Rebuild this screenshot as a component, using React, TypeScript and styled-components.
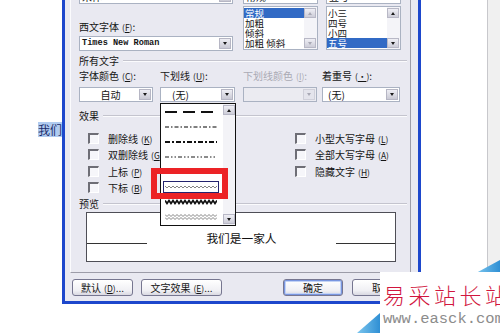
import React from 'react';
import styled, { createGlobalStyle } from 'styled-components';

const CJK = `"Noto Sans CJK SC", "Liberation Sans", sans-serif`;

const GlobalStyle = createGlobalStyle`
  html, body { margin: 0; padding: 0; background: #fff; }
  body { font-family: ${CJK}; }
`;

const Canvas = styled.div`
  position: relative;
  width: 500px;
  height: 333px;
  overflow: hidden;
  display: flex;
  background: #fff;
  font-family: ${CJK};
  font-size: 10px;
  color: #151515;
`;

const DocMargin = styled.div`
  width: 62px;
  flex-shrink: 0;
  box-sizing: border-box;
  padding: 122px 0 0 38px;
`;

const Selection = styled.span`
  display: inline-block;
  background: #b0cbf0;
  color: #1b2b6b;
  font-size: 12px;
  line-height: 15px;
  white-space: nowrap;
`;

const Dialog = styled.div`
  width: 359px;
  height: 304px;
  flex-shrink: 0;
  box-sizing: border-box;
  border: 3px solid #1d47cc;
  border-top: none;
  background: #e9e9f1;
  display: flex;
  flex-direction: column;
`;

const Panel = styled.div`
  height: 273px;
  margin: 0 7px 0 5px;
  box-sizing: border-box;
  border-left: 1px solid #fbfbfd;
  border-right: 1px solid #9c9ca8;
  border-bottom: 1px solid #9c9ca8;
  padding-left: 8px;
  overflow: hidden;
  display: flex;
  flex-direction: column;
`;

const TopRow = styled.div`
  display: flex;
  margin-top: -11px;
`;

const Column = styled.div<{ $width: number; $ml?: number }>`
  width: ${({ $width }) => $width}px;
  margin-left: ${({ $ml }) => $ml ?? 0}px;
  display: flex;
  flex-direction: column;
`;

const Label = styled.div<{ $mt?: number; $disabled?: boolean }>`
  margin-top: ${({ $mt }) => $mt ?? 0}px;
  height: 12px;
  line-height: 12px;
  white-space: nowrap;
  color: ${({ $disabled }) => ($disabled ? '#a9a9b4' : '#151515')};
`;

const Key = styled.span`
  font-size: 8.5px;
  margin-left: 3px;
  & u {
    text-decoration-thickness: 1px;
  }
`;

const Combo = styled.div<{ $width: number; $mt?: number; $disabled?: boolean }>`
  width: ${({ $width }) => $width}px;
  height: 15px;
  margin-top: ${({ $mt }) => $mt ?? 0}px;
  box-sizing: border-box;
  border: 1px solid #aab2c2;
  background: ${({ $disabled }) => ($disabled ? '#ebebf1' : '#fff')};
  display: flex;
  align-items: center;
`;

const ComboText = styled.span<{ $pad?: number; $center?: boolean; $mono?: boolean }>`
  flex: 1;
  padding-left: ${({ $pad }) => $pad ?? 2}px;
  text-align: ${({ $center }) => ($center ? 'center' : 'left')};
  font-family: ${({ $mono }) => ($mono ? '"Liberation Mono", monospace' : CJK)};
  font-size: ${({ $mono }) => ($mono ? '8.6px' : '10px')};
  font-weight: ${({ $mono }) => ($mono ? 'bold' : 'normal')};
  line-height: 13px;
  white-space: nowrap;
  overflow: hidden;
`;

const DropBtn = styled.span<{ $disabled?: boolean }>`
  width: 12px;
  height: 11px;
  margin-right: 1px;
  flex-shrink: 0;
  box-sizing: border-box;
  border: 1px solid ${({ $disabled }) => ($disabled ? '#d0d0da' : '#b6b6c4')};
  background: ${({ $disabled }) =>
    $disabled ? '#e4e4ec' : 'linear-gradient(#eeeef4, #c9c9d4)'};
  display: flex;
  align-items: center;
  justify-content: center;
  &::after {
    content: '';
    border-left: 2.5px solid transparent;
    border-right: 2.5px solid transparent;
    border-top: 3px solid ${({ $disabled }) => ($disabled ? '#a8a8b4' : '#1a1a1a')};
  }
`;

const ScrollBtn = styled.span<{ $up?: boolean; $dim?: boolean }>`
  width: 12px;
  height: 10px;
  box-sizing: border-box;
  border: 1px solid #b8b8c6;
  background: linear-gradient(#efeff5, #cdcdd8);
  display: flex;
  align-items: center;
  justify-content: center;
  &::after {
    content: '';
    border-left: 2.5px solid transparent;
    border-right: 2.5px solid transparent;
    ${({ $up, $dim }) =>
      $up
        ? `border-bottom: 3px solid ${$dim ? '#a8a8b4' : '#1a1a1a'};`
        : `border-top: 3px solid ${$dim ? '#a8a8b4' : '#1a1a1a'};`}
  }
`;

const ListBox = styled.div`
  margin-top: 2px;
  height: 44px;
  box-sizing: border-box;
  border: 1px solid #aab2c2;
  background: #fff;
  display: flex;
`;

const ListItems = styled.div`
  flex: 1;
  padding-top: 1px;
`;

const ListItem = styled.div<{ $selected?: boolean }>`
  height: 10px;
  line-height: 10px;
  font-size: 9.5px;
  padding-left: 1px;
  white-space: nowrap;
  overflow: hidden;
  background: ${({ $selected }) => ($selected ? '#316ac5' : 'transparent')};
  color: ${({ $selected }) => ($selected ? '#fff' : '#151515')};
`;

const ListScroll = styled.div`
  width: 13px;
  padding: 1px 1px 1px 0;
  box-sizing: border-box;
  display: flex;
  flex-direction: column;
  justify-content: space-between;
  background: #f4f4f8;
`;

const GroupHeader = styled.div<{ $mt: number }>`
  margin-top: ${({ $mt }) => $mt}px;
  margin-right: 3px;
  height: 12px;
  line-height: 12px;
  display: flex;
  align-items: center;
  gap: 4px;
  &::after {
    content: '';
    flex: 1;
    border-top: 1px solid #c4c4ce;
    border-bottom: 1px solid #fbfbfd;
  }
`;

const FourCols = styled.div<{ $mt: number }>`
  margin-top: ${({ $mt }) => $mt}px;
  display: grid;
  grid-template-columns: 81px 83px 79px 79px;
`;

const Effects = styled.div`
  margin-top: 8px;
  padding-left: 9px;
  display: grid;
  grid-template-columns: 207px 1fr;
  grid-template-rows: repeat(4, 16.5px);
  grid-auto-flow: column;
`;

const CheckRow = styled.div`
  display: flex;
  align-items: center;
  gap: 9px;
  white-space: nowrap;
`;

const CheckBox = styled.span`
  width: 11px;
  height: 11px;
  box-sizing: border-box;
  border-top: 2px solid #6e6e76;
  border-left: 2px solid #6e6e76;
  border-right: 1px solid #fff;
  border-bottom: 1px solid #fff;
  background: #f6f6fa;
`;

const Preview = styled.div`
  margin: 2px 0 0 7px;
  width: 310px;
  height: 50px;
  box-sizing: border-box;
  border: 1px solid #4e4e56;
  background: #fff;
  display: flex;
  align-items: center;
`;

const Rule = styled.span<{ $width: number }>`
  width: ${({ $width }) => $width}px;
  height: 1px;
  margin-top: 12px;
  background: #333;
`;

const PreviewText = styled.span`
  flex: 1;
  text-align: center;
  font-size: 11.7px;
  color: #111;
`;

const ButtonRow = styled.div`
  display: flex;
  margin: 6px 6px 0 7px;
`;

const Btn = styled.button<{ $width: number; $ml?: number; $auto?: boolean; $focus?: boolean }>`
  width: ${({ $width }) => $width}px;
  height: 17px;
  margin-left: ${({ $auto, $ml }) => ($auto ? 'auto' : `${$ml ?? 0}px`)};
  padding: 0;
  box-sizing: border-box;
  border: 1px solid #767690;
  border-radius: 3px;
  background: linear-gradient(#ffffff, #f0f0f4 70%, #d9d9e2);
  font-family: ${CJK};
  font-size: 10px;
  line-height: 15px;
  color: #151515;
  white-space: nowrap;
  box-shadow: ${({ $focus }) =>
    $focus ? 'inset 0 0 0 1px #7996e0, inset 0 0 0 2px #c3d3f5' : 'none'};
`;

const RightArea = styled.div`
  flex: 1;
  display: flex;
  justify-content: flex-end;
`;

const Strip = styled.div`
  width: 13px;
  box-sizing: border-box;
  border-left: 1px solid #c8c8cc;
  background: #f0f0f0;
`;

const DropList = styled.div`
  position: absolute;
  left: 160px;
  top: 103px;
  width: 76px;
  height: 123px;
  box-sizing: border-box;
  border: 1px solid #111;
  background: #fff;
  display: flex;
`;

const DropItems = styled.div`
  flex: 1;
`;

const DropItem = styled.div<{ $selected?: boolean }>`
  height: 15px;
  display: flex;
  align-items: center;
  padding-left: 2px;
  & > span {
    width: 56px;
    height: 12px;
    box-sizing: border-box;
    border: 1px solid ${({ $selected }) => ($selected ? '#23236e' : 'transparent')};
    display: flex;
    align-items: center;
    justify-content: center;
  }
`;

const DropScroll = styled.div`
  width: 12px;
  margin-left: 1px;
  padding: 1px 0;
  display: flex;
  flex-direction: column;
  justify-content: space-between;
  background: #f3f3f7;
`;

const Highlight = styled.div`
  position: absolute;
  left: 151px;
  top: 168px;
  width: 77px;
  height: 31px;
  box-sizing: border-box;
  border: 6px solid #ec2326;
`;

const Watermark = styled.div`
  position: absolute;
  left: 380px;
  top: 272px;
  width: 120px;
  height: 61px;
  background: #fff;
`;

const WmTitle = styled.div`
  margin: 9px 0 0 3px;
  font-family: ${CJK};
  font-size: 22px;
  font-weight: 300;
  line-height: 26px;
  letter-spacing: 3.5px;
  color: #d1163e;
  white-space: nowrap;
`;

const WmUrl = styled.div`
  margin: 4px 0 0 3px;
  font-family: "Liberation Mono", monospace;
  font-size: 15.5px;
  line-height: 16px;
  color: #8c8c8c;
  white-space: nowrap;
`;

const Corner = styled.svg<{ $left: number; $top: number }>`
  position: absolute;
  left: ${({ $left }) => $left}px;
  top: ${({ $top }) => $top}px;
`;

const wave = (w: number, amp: number, half: number, y: number) => {
  const pts: string[] = [];
  let i = 0;
  for (let x = 0; x <= w; x += half, i++) {
    pts.push(`${x},${y + (i % 2 === 0 ? -amp : amp)}`);
  }
  return pts.join(' ');
};

const LineSample = ({ kind }: { kind: number }) => (
  <svg width="52" height="8" viewBox="0 0 52 8">
    {kind === 0 && <line x1="0" y1="4" x2="52" y2="4" stroke="#111" strokeWidth="2" strokeDasharray="12 6" />}
    {kind === 1 && <line x1="0" y1="4" x2="52" y2="4" stroke="#555" strokeWidth="1.3" strokeDasharray="4 2 1.5 2" />}
    {kind === 2 && <line x1="0" y1="4" x2="52" y2="4" stroke="#111" strokeWidth="2" strokeDasharray="5 2 2 2" />}
    {kind === 3 && <line x1="0" y1="4" x2="52" y2="4" stroke="#666" strokeWidth="1.3" strokeDasharray="4 2 1.5 2 1.5 2" />}
    {kind === 4 && <line x1="0" y1="4" x2="52" y2="4" stroke="#111" strokeWidth="2" strokeDasharray="5 2 2 2 2 2" />}
    {kind === 5 && <polyline points={wave(52, 1, 2, 4)} fill="none" stroke="#777" strokeWidth="0.9" />}
    {kind === 6 && <polyline points={wave(52, 1.5, 2, 4)} fill="none" stroke="#111" strokeWidth="1.8" />}
    {kind === 7 && (
      <>
        <polyline points={wave(52, 1, 2, 2.5)} fill="none" stroke="#777" strokeWidth="0.9" />
        <polyline points={wave(52, 1, 2, 5.5)} fill="none" stroke="#777" strokeWidth="0.9" />
      </>
    )}
  </svg>
);

const K = ({ c }: { c: string }) => (
  <Key>
    (<u>{c}</u>)
  </Key>
);

const leftEffects = [
  ['删除线', 'K'],
  ['双删除线', 'G'],
  ['上标', 'P'],
  ['下标', 'B']
];

const rightEffects = [
  ['小型大写字母', 'L'],
  ['全部大写字母', 'A'],
  ['隐藏文字', 'H']
];

const App = () => (
  <Canvas>
    <GlobalStyle />
    <DocMargin>
      <Selection>我们</Selection>
    </DocMargin>

    <Dialog>
      <Panel>
        <TopRow>
          <Column $width={154}>
            <Combo $width={154}>
              <ComboText>宋体</ComboText>
              <DropBtn />
            </Combo>
            <Label $mt={17}>
              西文字体<K c="F" />:
            </Label>
            <Combo $width={154} $mt={3}>
              <ComboText $mono>Times New Roman</ComboText>
              <DropBtn />
            </Combo>
          </Column>
          <Column $width={75} $ml={10}>
            <Combo $width={75}>
              <ComboText>常规</ComboText>
            </Combo>
            <ListBox>
              <ListItems>
                <ListItem $selected>常规</ListItem>
                <ListItem>加粗</ListItem>
                <ListItem>倾斜</ListItem>
                <ListItem>加粗 倾斜</ListItem>
              </ListItems>
              <ListScroll>
                <ScrollBtn $up $dim />
                <ScrollBtn $dim />
              </ListScroll>
            </ListBox>
          </Column>
          <Column $width={75} $ml={8}>
            <Combo $width={75}>
              <ComboText>五号</ComboText>
            </Combo>
            <ListBox>
              <ListItems>
                <ListItem>小三</ListItem>
                <ListItem>四号</ListItem>
                <ListItem>小四</ListItem>
                <ListItem $selected>五号</ListItem>
              </ListItems>
              <ListScroll>
                <ScrollBtn $up />
                <ScrollBtn />
              </ListScroll>
            </ListBox>
          </Column>
        </TopRow>

        <GroupHeader $mt={4}>所有文字</GroupHeader>
        <FourCols $mt={3}>
          <Label>
            字体颜色<K c="C" />:
          </Label>
          <Label>
            下划线<K c="U" />:
          </Label>
          <Label $disabled>
            下划线颜色<K c="I" />:
          </Label>
          <Label>
            着重号<K c="·" />:
          </Label>
        </FourCols>
        <FourCols $mt={5}>
          <Combo $width={74}>
            <ComboText $center>自动</ComboText>
            <DropBtn />
          </Combo>
          <Combo $width={75}>
            <ComboText $pad={11}>(无)</ComboText>
            <DropBtn />
          </Combo>
          <Combo $width={74} $disabled>
            <ComboText />
            <DropBtn $disabled />
          </Combo>
          <Combo $width={78}>
            <ComboText $pad={5}>(无)</ComboText>
            <DropBtn />
          </Combo>
        </FourCols>

        <GroupHeader $mt={8}>效果</GroupHeader>
        <Effects>
          {leftEffects.map(([label, key]) => (
            <CheckRow key={key}>
              <CheckBox />
              <span>
                {label}
                <K c={key} />
              </span>
            </CheckRow>
          ))}
          {rightEffects.map(([label, key]) => (
            <CheckRow key={key}>
              <CheckBox />
              <span>
                {label}
                <K c={key} />
              </span>
            </CheckRow>
          ))}
        </Effects>

        <GroupHeader $mt={2}>预览</GroupHeader>
        <Preview>
          <Rule $width={60} />
          <PreviewText>我们是一家人</PreviewText>
          <Rule $width={59} />
        </Preview>
      </Panel>

      <ButtonRow>
        <Btn $width={61}>
          默认<K c="D" />...
        </Btn>
        <Btn $width={81} $ml={8}>
          文字效果<K c="E" />...
        </Btn>
        <Btn $width={60} $auto $focus>
          确定
        </Btn>
        <Btn $width={60} $ml={9}>
          取消
        </Btn>
      </ButtonRow>
    </Dialog>

    <RightArea>
      <Strip />
    </RightArea>

    <DropList>
      <DropItems>
        {[0, 1, 2, 3, 4, 5, 6, 7].map((k) => (
          <DropItem key={k} $selected={k === 5}>
            <span>
              <LineSample kind={k} />
            </span>
          </DropItem>
        ))}
      </DropItems>
      <DropScroll>
        <ScrollBtn $up />
        <ScrollBtn />
      </DropScroll>
    </DropList>

    <Highlight />

    <Corner $left={476} $top={260} width="24" height="13" viewBox="0 0 24 13">
      <defs>
        <linearGradient id="wmBlueA" x1="0" y1="0" x2="1" y2="0">
          <stop offset="0" stopColor="#7cc6ee" />
          <stop offset="1" stopColor="#2f8fd4" />
        </linearGradient>
      </defs>
      <polygon points="0,13 24,13 24,0" fill="url(#wmBlueA)" />
    </Corner>

    <Watermark>
      <WmTitle>易采站长站</WmTitle>
      <WmUrl>www.easck.com</WmUrl>
    </Watermark>

    <Corner $left={357} $top={313} width="23" height="20" viewBox="0 0 23 20">
      <defs>
        <linearGradient id="wmBlueB" x1="0" y1="0" x2="1" y2="0">
          <stop offset="0" stopColor="#7cc6ee" />
          <stop offset="1" stopColor="#2f8fd4" />
        </linearGradient>
      </defs>
      <polygon points="0,20 23,20 23,0" fill="url(#wmBlueB)" />
    </Corner>
  </Canvas>
);

export default App;
